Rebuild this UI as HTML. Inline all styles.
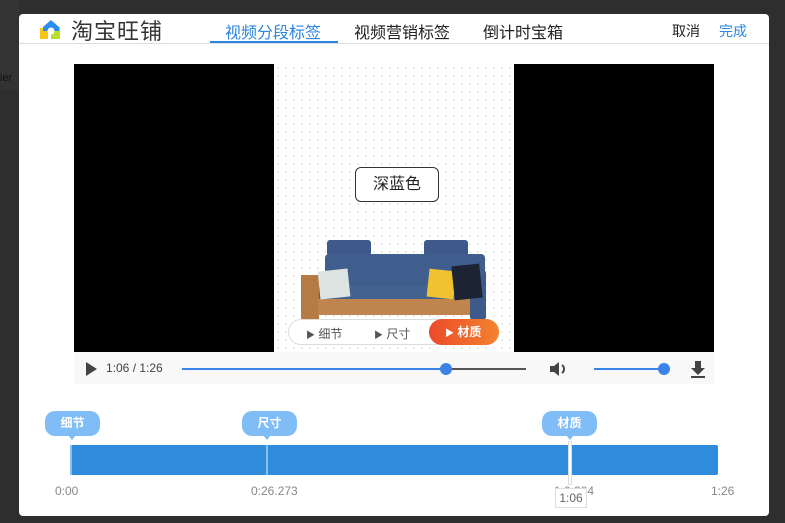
<!DOCTYPE html>
<html><head><meta charset="utf-8"><style>
*{margin:0;padding:0;box-sizing:border-box}
body{width:785px;height:523px;background:#2e2e2e;font-family:"Liberation Sans","Noto Sans CJK SC",sans-serif;position:relative;overflow:hidden}
.a{position:absolute}
.modal{left:19px;top:14px;width:750px;height:502px;background:#fff;border-radius:4px}
</style></head><body>
<div class="a" style="left:0;top:0;width:19px;height:90px;background:#333"></div>
<div class="a" style="left:0;top:72px;font-size:11px;color:#111">ier</div>
<div class="a" style="left:767px;top:104px;font-size:12px;color:#234">*1</div>
<div class="a modal">
  <svg class="a" style="left:20px;top:3px" width="24" height="24" viewBox="0 0 24 24">
    <rect x="1" y="11" width="8" height="11" fill="#f5c518"/>
    <rect x="12" y="10" width="9" height="12" fill="#b9e026"/>
    <path d="M4 10 L12 3 L20 10 L20 14 L4 14Z" fill="#2b8df0"/>
    <circle cx="12" cy="14" r="3.5" fill="#fff"/>
  </svg>
  <div class="a" style="left:52px;top:0px;font-size:22px;color:#333;letter-spacing:1px">淘宝旺铺</div>
  <div class="a" style="left:206px;top:5px;font-size:16px;color:#2b86e0">视频分段标签</div>
  <div class="a" style="left:191px;top:27px;width:128px;height:3px;background:#2b86e0"></div>
  <div class="a" style="left:335px;top:5px;font-size:16px;color:#222">视频营销标签</div>
  <div class="a" style="left:464px;top:5px;font-size:16px;color:#222">倒计时宝箱</div>
  <div class="a" style="left:653px;top:7px;font-size:14px;color:#222">取消</div>
  <div class="a" style="left:700px;top:7px;font-size:14px;color:#2b86e0">完成</div>
  <div class="a" style="left:0;top:29px;width:750px;height:1px;background:#ddd"></div>
  <div class="a" style="left:55px;top:50px;width:200px;height:288px;background:#000"></div>
  <div class="a" style="left:495px;top:50px;width:200px;height:288px;background:#000"></div>
  <div class="a" style="left:255px;top:50px;width:240px;height:288px;background-color:#fff;background-image:radial-gradient(#dcdcdc 0.7px,transparent 1px);background-size:8px 8px"></div>
  <div class="a" style="left:336px;top:153px;width:84px;height:35px;border:1px solid #333;border-radius:6px;background:#fff;font-size:16px;color:#222;text-align:center;line-height:33px">深蓝色</div>
  <!-- sofa -->
  <div class="a" style="left:308px;top:226px;width:44px;height:16px;background:#3d5a8a;border-radius:3px"></div>
  <div class="a" style="left:405px;top:226px;width:44px;height:16px;background:#3d5a8a;border-radius:3px"></div>
  <div class="a" style="left:306px;top:240px;width:160px;height:34px;background:#3f5d8d;border-radius:4px"></div>
  <div class="a" style="left:298px;top:272px;width:160px;height:14px;background:#42628f;border-radius:3px"></div>
  <div class="a" style="left:282px;top:261px;width:18px;height:48px;background:#b67a45"></div>
  <div class="a" style="left:451px;top:256px;width:16px;height:50px;background:#3d5a8a;border-radius:3px"></div>
  <div class="a" style="left:299px;top:285px;width:152px;height:16px;background:#c0844e"></div>
  <div class="a" style="left:300px;top:256px;width:30px;height:28px;background:#dde3e0;transform:rotate(-6deg)"></div>
  <div class="a" style="left:409px;top:256px;width:27px;height:28px;background:#f0c232;transform:rotate(6deg)"></div>
  <div class="a" style="left:434px;top:251px;width:28px;height:34px;background:#1c2332;transform:rotate(-6deg)"></div>
  <div class="a" style="left:269px;top:305px;width:211px;height:26px;border:1px solid #ddd;border-radius:13px;background:#fff"></div>
  <div class="a" style="left:287px;top:311px;font-size:12px;color:#555"><span style="font-size:9px">▶</span> 细节</div>
  <div class="a" style="left:355px;top:311px;font-size:12px;color:#555"><span style="font-size:9px">▶</span> 尺寸</div>
  <div class="a" style="left:410px;top:305px;width:70px;height:26px;border-radius:13px;background:linear-gradient(90deg,#ec4a2a,#f2832f);color:#fff;font-size:12px;font-weight:bold;line-height:26px;padding-left:16px"><span style="font-size:9px">▶</span> 材质</div>
  <div class="a" style="left:55px;top:338px;width:640px;height:32px;background:#f8f8f8"></div>
  <div class="a" style="left:67px;top:348px;width:0;height:0;border-left:11px solid #444;border-top:7px solid transparent;border-bottom:7px solid transparent"></div>
  <div class="a" style="left:87px;top:347px;font-size:12px;color:#444">1:06 / 1:26</div>
  <div class="a" style="left:163px;top:354px;width:264px;height:2px;background:#3b82e8"></div>
  <div class="a" style="left:427px;top:354px;width:80px;height:2px;background:#555"></div>
  <div class="a" style="left:421px;top:349px;width:12px;height:12px;border-radius:50%;background:#3b82e8"></div>
  <svg class="a" style="left:530px;top:346px" width="20" height="18" viewBox="0 0 20 18"><path d="M1 6h4l5-4v14l-5-4H1z" fill="#444"/><path d="M13 5a5 5 0 0 1 0 8" stroke="#444" stroke-width="2" fill="none"/></svg>
  <div class="a" style="left:575px;top:354px;width:70px;height:2px;background:#3b82e8"></div>
  <div class="a" style="left:639px;top:349px;width:12px;height:12px;border-radius:50%;background:#3b82e8"></div>
  <svg class="a" style="left:670px;top:346px" width="18" height="19" viewBox="0 0 18 19"><path d="M6 1h6v7h4l-7 7-7-7h4z" fill="#444"/><rect x="2" y="16" width="14" height="2" fill="#444"/></svg>
  <div class="a" style="left:51px;top:431px;width:648px;height:30px;background:#2f8bdc;border-radius:2px"></div>
  <div class="a" style="left:51px;top:431px;width:2px;height:30px;background:#8cc0ee"></div>
  <div class="a" style="left:247px;top:431px;width:2px;height:30px;background:#8cc0ee"></div>
  <div class="a" style="left:549px;top:427px;width:4px;height:44px;background:#fff;border:1px solid #ddd"></div>
  <div class="a" style="left:26px;top:397px;width:55px;height:25px;border-radius:10px;background:#80bdf6;color:#fff;font-size:12px;font-weight:bold;text-align:center;line-height:25px">细节</div>
  <div class="a" style="left:49px;top:421px;border-top:5px solid #80bdf6;border-left:4px solid transparent;border-right:4px solid transparent"></div>
  <div class="a" style="left:223px;top:397px;width:55px;height:25px;border-radius:10px;background:#80bdf6;color:#fff;font-size:12px;font-weight:bold;text-align:center;line-height:25px">尺寸</div>
  <div class="a" style="left:244px;top:421px;border-top:5px solid #80bdf6;border-left:4px solid transparent;border-right:4px solid transparent"></div>
  <div class="a" style="left:523px;top:397px;width:55px;height:25px;border-radius:10px;background:#80bdf6;color:#fff;font-size:12px;font-weight:bold;text-align:center;line-height:25px">材质</div>
  <div class="a" style="left:547px;top:421px;border-top:5px solid #80bdf6;border-left:4px solid transparent;border-right:4px solid transparent"></div>
  <div class="a" style="left:36px;top:470px;font-size:12px;color:#888">0:00</div>
  <div class="a" style="left:232px;top:470px;font-size:12px;color:#888">0:26.273</div>
  <div class="a" style="left:535px;top:470px;font-size:12px;color:#888">1:0.284</div>
  <div class="a" style="left:692px;top:470px;font-size:12px;color:#888">1:26</div>
  <div class="a" style="left:536px;top:474px;width:32px;height:20px;background:#fff;border:1px solid #ddd;font-size:12px;color:#666;text-align:center;line-height:18px">1:06</div>
</div>
</body></html>
